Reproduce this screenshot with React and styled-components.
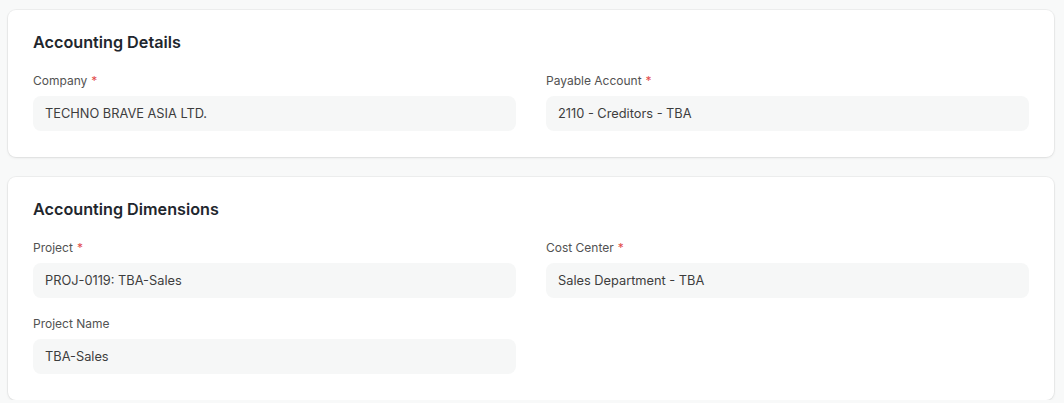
import React from "react";
import styled, { createGlobalStyle } from "styled-components";

const Global = createGlobalStyle`
  html, body {
    margin: 0;
    padding: 0;
    background: #f8f9f9;
    font-family: Inter, "Noto Sans", sans-serif;
    -webkit-font-smoothing: antialiased;
  }
`;

const Page = styled.div`
  display: flex;
  flex-direction: column;
  gap: 20px;
  padding: 10px 10px 0 8px;
`;

const Card = styled.section`
  background: #ffffff;
  border-radius: 8px;
  box-shadow: 0 0 0 1px rgba(0, 0, 0, 0.04), 0 1px 3px rgba(0, 0, 0, 0.08);
  padding: 22px 25px 26px 25px;
`;

const Heading = styled.h2`
  margin: 0 0 21px 0;
  font-size: 16.2px;
  line-height: 20px;
  font-weight: 600;
  color: #1f272e;
`;

const Grid = styled.div`
  display: grid;
  grid-template-columns: 1fr 1fr;
  column-gap: 30px;
  align-items: start;
`;

const Column = styled.div`
  display: flex;
  flex-direction: column;
  gap: 18px;
`;

const Field = styled.div`
  display: flex;
  flex-direction: column;
  gap: 7px;
`;

const Label = styled.label`
  font-size: 12px;
  line-height: 16px;
  color: #525252;
`;

const Required = styled.span`
  color: #e24c4c;
  margin-left: 4px;
`;

const Input = styled.div`
  height: 35px;
  box-sizing: border-box;
  display: flex;
  align-items: center;
  padding: 0 12px;
  background: #f6f7f7;
  border-radius: 8px;
  font-size: 12.8px;
  color: #3d3d3d;
`;

const FormField = ({ label, value, required }) => (
  <Field>
    <Label>
      {label}
      {required && <Required>*</Required>}
    </Label>
    <Input>{value}</Input>
  </Field>
);

export default function App() {
  return (
    <>
      <Global />
      <Page>
        <Card>
          <Heading>Accounting Details</Heading>
          <Grid>
            <FormField label="Company" value="TECHNO BRAVE ASIA LTD." required />
            <FormField label="Payable Account" value="2110 - Creditors - TBA" required />
          </Grid>
        </Card>
        <Card>
          <Heading>Accounting Dimensions</Heading>
          <Grid>
            <Column>
              <FormField label="Project" value="PROJ-0119: TBA-Sales" required />
              <FormField label="Project Name" value="TBA-Sales" />
            </Column>
            <Column>
              <FormField label="Cost Center" value="Sales Department - TBA" required />
            </Column>
          </Grid>
        </Card>
      </Page>
    </>
  );
}
